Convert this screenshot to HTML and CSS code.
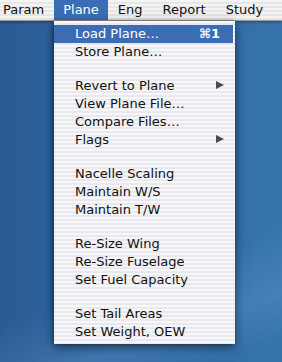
FILE: index.html
```html
<!DOCTYPE html>
<html>
<head>
<meta charset="utf-8">
<link rel="stylesheet" href="styles.css">
</head>
<body>
<div class="desktop">
  <div class="menubar">
    <div class="mb-item first">Param</div>
    <div class="mb-item active">Plane</div>
    <div class="mb-item">Eng</div>
    <div class="mb-item">Report</div>
    <div class="mb-item">Study</div>
  </div>
  <div class="menu">
    <div class="item selected"><span>Load Plane…</span><span class="key">⌘1</span></div>
    <div class="item"><span>Store Plane…</span></div>
    <div class="sep"></div>
    <div class="item"><span>Revert to Plane</span><span class="arrow"></span></div>
    <div class="item"><span>View Plane File…</span></div>
    <div class="item"><span>Compare Files…</span></div>
    <div class="item"><span>Flags</span><span class="arrow"></span></div>
    <div class="sep"></div>
    <div class="item"><span>Nacelle Scaling</span></div>
    <div class="item"><span>Maintain W/S</span></div>
    <div class="item"><span>Maintain T/W</span></div>
    <div class="sep"></div>
    <div class="item"><span>Re-Size Wing</span></div>
    <div class="item"><span>Re-Size Fuselage</span></div>
    <div class="item"><span>Set Fuel Capacity</span></div>
    <div class="sep"></div>
    <div class="item"><span>Set Tail Areas</span></div>
    <div class="item"><span>Set Weight, OEW</span></div>
  </div>
</div>
</body>
</html>
```
FILE: styles.css
```css
html, body {
  margin: 0;
  padding: 0;
}
body {
  width: 282px;
  height: 362px;
  overflow: hidden;
  font-family: "DejaVu Sans", sans-serif;
  font-size: 13px;
  color: #111;
}
.desktop {
  position: relative;
  width: 282px;
  height: 362px;
  background:
    linear-gradient(160deg, rgba(255,255,255,0) 70%, rgba(120,170,220,0.25) 85%, rgba(255,255,255,0) 95%),
    linear-gradient(to right, #2a5b94 0%, #2f67a2 40%, #3673ad 100%);
}
.menubar {
  display: flex;
  height: 20px;
  border-bottom: 1px solid #9c9c9c;
  background: repeating-linear-gradient(to bottom, #f4f4f4 0px, #f4f4f4 2px, #e6e6e6 2px, #e6e6e6 4px);
  box-shadow: 0 1px 3px rgba(0,0,0,0.35);
}
.mb-item {
  padding: 0 10px;
  line-height: 20px;
  height: 20px;
  white-space: nowrap;
}
.mb-item.first {
  padding-left: 3px;
  padding-right: 10px;
}
.mb-item.active {
  background: #3a6db5;
  color: #fff;
  padding: 0 9px;
}
.menu {
  position: absolute;
  left: 54px;
  top: 21px;
  width: 181px;
  padding: 4px 0 3px;
  background: repeating-linear-gradient(to bottom, #f7f7f9 0px, #f7f7f9 2px, #e9e9ed 2px, #e9e9ed 4px);
  box-shadow: 0 3px 10px rgba(0,0,0,0.55), -1px 0 3px rgba(0,0,0,0.25);
}
.item {
  display: flex;
  justify-content: space-between;
  align-items: center;
  height: 18px;
  line-height: 18px;
  padding: 0 11px 0 21px;
  white-space: nowrap;
}
.item.selected {
  background: #3b6cb4;
  color: #fff;
  margin-right: 2px;
  padding-right: 13px;
}
.key {
  font-weight: bold;
  font-size: 13px;
  letter-spacing: 0;
}
.arrow {
  width: 0;
  height: 0;
  border-top: 4.5px solid transparent;
  border-bottom: 4.5px solid transparent;
  border-left: 8px solid #4a4a4a;
  margin-top: -3px;
}
.sep {
  height: 16px;
}
```
